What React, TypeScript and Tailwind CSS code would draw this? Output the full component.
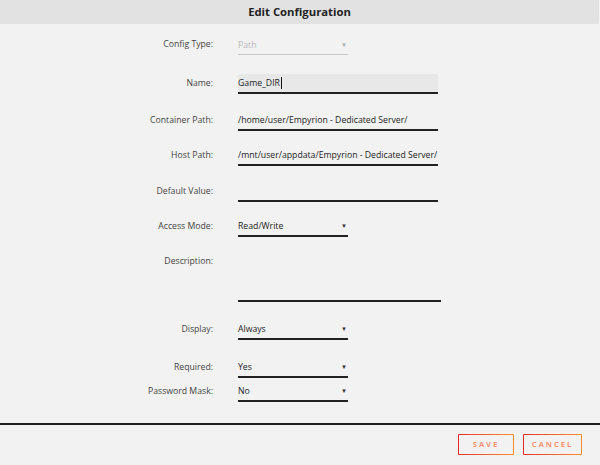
import React from "react";

const font = { fontFamily: '"Open Sans", "Noto Sans", sans-serif' };

const Label = ({ children }: { children: React.ReactNode }) => (
    <div className="w-[213px] shrink-0 text-right text-[8.7px] leading-[18px] text-[#444]">{children}</div>
);

const TextRow = ({ label, value, active = false, mt }: { label: string; value?: string; active?: boolean; mt: string }) => (
    <div className={`flex items-start gap-[25px] ${mt}`}>
        <Label>{label}</Label>
        <div className={`w-[200px] h-[20px] border-b-2 border-[#222] text-[8.7px] leading-[18px] text-[#222] flex items-center ${active ? 'bg-[#e8e8e8]' : ''}`}>
            <span className="whitespace-nowrap">{value}</span>
            {active && <span className="w-[1px] h-[12px] bg-[#111] ml-[1px]" />}
        </div>
    </div>
);

const SelectRow = ({ label, value, disabled = false, mt }: { label: string; value: string; disabled?: boolean; mt: string }) => (
    <div className={`flex items-start gap-[25px] ${mt}`}>
        <Label>{label}</Label>
        <div
            className={`w-[110px] h-[20px] flex items-center justify-between text-[8.7px] leading-[18px] ${
                disabled ? 'border-b border-[#c8c8c8] text-[#b8b8b8]' : 'border-b-2 border-[#222] text-[#222]'
            }`}
        >
            <span>{value}</span>
            <span className={`text-[6px] pr-[1px] ${disabled ? 'text-[#aaa]' : 'text-[#333]'}`}>▼</span>
        </div>
    </div>
);

const GradientButton = ({ children, w }: { children: React.ReactNode; w: string }) => (
    <div className={`p-[1px] bg-gradient-to-r from-[#e22828] to-[#ff8c2f] rounded-[1px] ${w}`}>
        <div className="h-[19px] bg-[#f2f2f2] flex items-center justify-center">
            <span className="text-[7.5px] font-bold tracking-[2px] text-[#f89274] leading-none">{children}</span>
        </div>
    </div>
);

export default function App() {
    return (
        <div className="w-[600px] h-[465px] bg-[#f2f2f2] flex flex-col overflow-hidden" style={font}>
            <div className="h-[24px] mr-[1px] bg-[#e2e2e2] rounded-br-[2px] flex items-center justify-center">
                <h1 className="text-[11.3px] font-bold text-[#222]">Edit Configuration</h1>
            </div>

            <div className="flex flex-col">
                <SelectRow label="Config Type:" value="Path" disabled mt="mt-[11px]" />
                <TextRow label="Name:" value="Game_DIR" active mt="mt-[19px]" />
                <TextRow label="Container Path:" value="/home/user/Empyrion - Dedicated Server/" mt="mt-[17px]" />
                <TextRow label="Host Path:" value="/mnt/user/appdata/Empyrion - Dedicated Server/" mt="mt-[15px]" />
                <TextRow label="Default Value:" mt="mt-[16px]" />
                <SelectRow label="Access Mode:" value="Read/Write" mt="mt-[15px]" />
                <div className="flex items-start gap-[25px] mt-[15px]">
                    <Label>Description:</Label>
                    <div className="w-[203px] h-[50px] border-b-2 border-[#222]" />
                </div>
                <SelectRow label="Display:" value="Always" mt="mt-[18px]" />
                <SelectRow label="Required:" value="Yes" mt="mt-[18px]" />
                <SelectRow label="Password Mask:" value="No" mt="mt-[4px]" />
            </div>

            <div className="mt-[21px] h-[2px] bg-[#1e1e1e]" />

            <div className="flex justify-end gap-[9px] pr-[18px] mt-[9px]">
                <GradientButton w="w-[56px]">SAVE</GradientButton>
                <GradientButton w="w-[59px]">CANCEL</GradientButton>
            </div>
        </div>
    );
}
